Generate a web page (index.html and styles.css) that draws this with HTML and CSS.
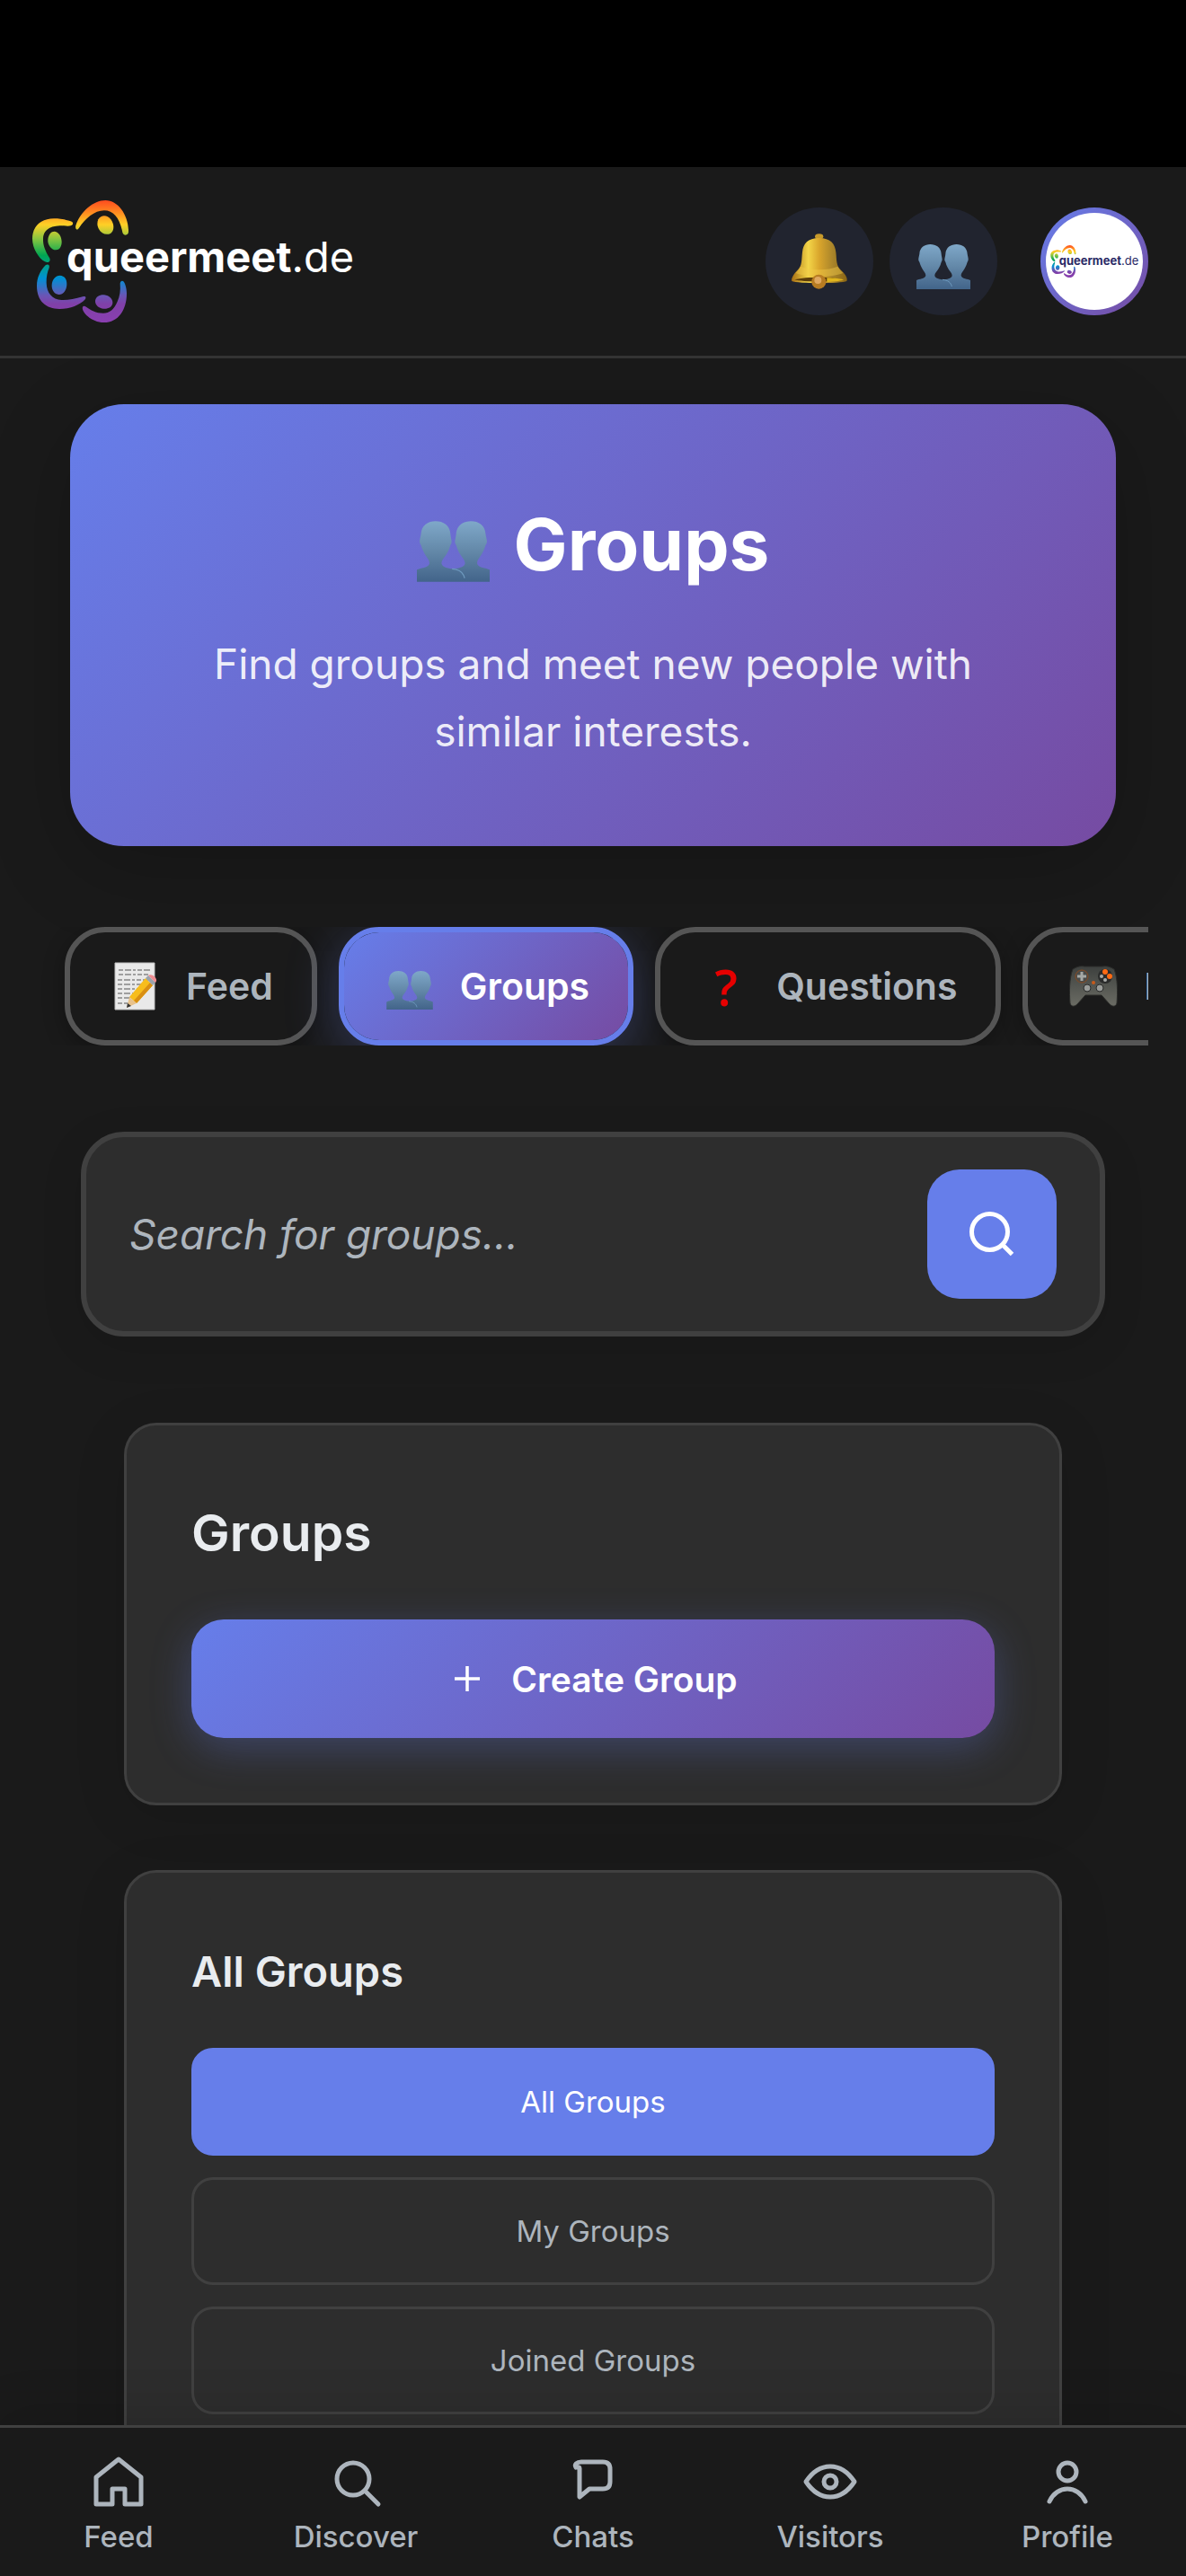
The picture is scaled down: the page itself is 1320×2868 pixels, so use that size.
FILE: index.html
```
<!DOCTYPE html>
<html lang="en">
<head>
  <meta charset="UTF-8">
  <meta name="viewport" content="width=device-width, initial-scale=1.0">
  <title>Groups - queermeet.de</title>
  <link rel="stylesheet" href="styles.css">
</head>
<body>

  <!-- Shared icons -->
  <svg class="sprite" width="0" height="0" aria-hidden="true">
    <defs>
      <linearGradient id="rainbow" gradientUnits="userSpaceOnUse" x1="0" y1="24" x2="0" y2="432">
        <stop offset="0" stop-color="#ff4b1f"/>
        <stop offset="0.1" stop-color="#ff8a20"/>
        <stop offset="0.2" stop-color="#ffd026"/>
        <stop offset="0.31" stop-color="#8dc63f"/>
        <stop offset="0.45" stop-color="#00a651"/>
        <stop offset="0.53" stop-color="#00a08a"/>
        <stop offset="0.64" stop-color="#0090d5"/>
        <stop offset="0.78" stop-color="#6a55b5"/>
        <stop offset="0.85" stop-color="#8040a8"/>
        <stop offset="1" stop-color="#8a3fb0"/>
      </linearGradient>
      <linearGradient id="bust" x1="0" y1="0" x2="0" y2="1">
        <stop offset="0" stop-color="#7fa8c9"/>
        <stop offset="0.5" stop-color="#6388a8"/>
        <stop offset="1" stop-color="#42648a"/>
      </linearGradient>
      <linearGradient id="gold" x1="0" y1="0" x2="1" y2="0">
        <stop offset="0" stop-color="#a86f14"/>
        <stop offset="0.3" stop-color="#f3d548"/>
        <stop offset="0.5" stop-color="#d9a52c"/>
        <stop offset="0.75" stop-color="#a8842a"/>
        <stop offset="1" stop-color="#8a6514"/>
      </linearGradient>
      <linearGradient id="pad" x1="0" y1="0" x2="0" y2="1">
        <stop offset="0" stop-color="#3d403e"/>
        <stop offset="1" stop-color="#6b6c64"/>
      </linearGradient>
    </defs>

    <symbol id="rosette" viewBox="18 24 324 408">
      <g fill="url(#rainbow)">
        <path d="M163 108C178 62 222 24 262 24C305 24 340 75 339 130C338 143 322 143 319 131C310 85 290 58 258 58C225 58 195 85 174 116C167 127 160 120 163 108Z"/>
        <path d="M146 94C120 86 105 84 90 85C45 86 18 112 18 152C18 185 40 218 60 229C72 236 81 226 75 216C60 192 53 172 54 152C55 122 78 110 110 109C125 109 138 111 146 109C156 106 156 97 146 94Z"/>
        <path d="M62 241C45 258 33 282 33 310C33 362 65 387 108 387C145 387 178 372 193 356C200 348 195 342 186 346C160 354 135 358 115 357C85 355 66 335 65 300C64 280 69 262 74 250C77 240 70 236 62 241Z"/>
        <path d="M186 380C180 395 215 432 257 432C305 432 333 390 333 335C333 318 328 303 324 297C319 290 312 293 311 302C313 325 310 345 302 362C290 390 275 401 255 401C230 401 212 390 198 380C192 376 188 376 186 380Z"/>
        <path d="M238 88C248 72 268 72 280 88C292 104 292 124 280 134C266 142 248 136 240 120C234 108 234 98 238 88Z"/>
        <path d="M70 155C72 137 82 127 93 128C106 130 116 145 116 163C116 180 108 190 97 190C82 190 68 172 70 155Z"/>
        <path d="M83 307C84 288 96 275 110 275C126 276 134 288 133 306C132 326 120 340 106 339C92 338 82 324 83 307Z"/>
        <path d="M228 359C230 346 242 339 258 340C275 342 287 354 286 368C284 380 272 387 256 386C240 384 227 374 228 359Z"/>
      </g>
    </symbol>

    <symbol id="people" viewBox="597 273 180 150">
      <path fill="url(#bust)" d="M597 423V393C605 389 626 388 628 378C629 366 615 360 607 332C601 324 605 318 607 305C608 283 625 273 643 273C662 273 679 283 680 305C681 318 686 324 680 332C673 360 657 366 658 378C660 388 677 390 687 391C697 390 714 388 716 378C717 366 701 360 694 332C688 324 693 318 694 305C695 283 712 273 731 273C749 273 766 283 767 305C769 318 773 324 767 332C759 360 745 366 746 378C748 388 769 389 777 393V423Z"/>
      <path fill="none" stroke="#6e9abf" stroke-width="3" d="M684 391C702 392 712 401 715 414"/>
    </symbol>

    <symbol id="bell" viewBox="180 239 186 184">
      <ellipse cx="272" cy="248" rx="14" ry="9" fill="#c79a2b"/>
      <path fill="url(#gold)" d="M272 253C310 253 325 272 328 300C331 325 328 345 345 360C362 375 368 388 364 397C345 406 200 406 181 397C178 388 186 375 200 360C216 345 213 325 216 300C219 272 234 253 272 253Z"/>
      <path fill="#f1c94a" opacity="0.45" d="M210 348C245 362 300 362 334 348C340 358 346 364 352 370C310 386 235 386 194 370C200 364 206 356 210 348Z"/>
      <path fill="#5d3d0a" d="M190 392C230 382 315 382 355 392C330 401 215 401 190 392Z"/>
      <path fill="#e0b51e" d="M298 386C325 386 345 389 355 392C340 398 315 400 298 400Z"/>
      <circle cx="271" cy="399" r="24" fill="#b87c22"/>
      <circle cx="268" cy="394" r="12" fill="#e0a860"/>
    </symbol>

    <symbol id="memo" viewBox="0 0 48 54">
      <path fill="#e9e9e9" stroke="#bdbdbd" d="M1 1H45V53H1Z"/>
      <path fill="none" stroke="#555" stroke-dasharray="5 2 7 2 3 2" d="M5 9H40M5 14H38M4 20H40M4 25H34M4 30H30M4 35H24M4 40H20M4 46H16"/>
      <path fill="#f7bd1c" d="M17 39L35 18L43 26L25 46Z"/>
      <path fill="#d98f12" d="M22 43L40 23L43 26L25 46Z"/>
      <path fill="#9aa3ad" d="M35 18L38 15L46 23L43 26Z"/>
      <path fill="#ef8d92" d="M38 15C42 12 50 19 46 23Z"/>
      <path fill="#e8c28c" d="M17 39L25 46L14 51Z"/>
      <path fill="#333" d="M15 46L19 49L14 51Z"/>
    </symbol>

    <symbol id="gamepad" viewBox="0 0 54 46">
      <path fill="url(#pad)" stroke="#2a2b29" d="M4 4C9 1 13 0 17 1H37C41 0 45 1 50 4C54 14 54 30 53 42C52 46 48 46 45 43L36 33H18L9 43C6 46 2 46 1 42C0 30 0 14 4 4Z"/>
      <circle cx="14" cy="12" r="7" fill="#4a4c4a" stroke="#8a4a20"/>
      <path stroke="#a5a8a5" stroke-width="3" d="M14 7V17M9 12H19"/>
      <circle cx="40" cy="12" r="8" fill="#2a2b2b"/>
      <circle cx="40" cy="7" r="3" fill="#ff6a13"/>
      <circle cx="45" cy="12" r="3" fill="#ff6a13"/>
      <circle cx="36" cy="12" r="2" fill="#a8aaa8"/>
      <circle cx="40" cy="16" r="2" fill="#a8aaa8"/>
      <circle cx="20" cy="25" r="4" fill="#9a9c99" stroke="#2a2b2b"/>
      <circle cx="34" cy="25" r="4" fill="#9a9c99" stroke="#2a2b2b"/>
      <circle cx="27" cy="19" r="2" fill="#c85a1a"/>
    </symbol>
  </svg>

  <div class="status-bar"></div>

  <!-- Header -->
  <header class="header">
    <a href="#" class="logo">
      <svg width="108" height="136" aria-hidden="true"><use href="#rosette"/></svg>
      <span class="logo-text"><b>queermeet</b>.de</span>
    </a>
    <div class="header-actions">
      <button class="icon-btn" aria-label="Notifications"><svg width="62" height="62"><use href="#bell"/></svg></button>
      <button class="icon-btn" aria-label="Friends"><svg class="people-sm" width="60" height="50"><use href="#people"/></svg></button>
      <a href="#" class="avatar" aria-label="My profile">
        <span class="avatar-inner">
          <svg width="29" height="36" aria-hidden="true"><use href="#rosette"/></svg>
          <span class="avatar-text"><b>queermeet</b>.de</span>
        </span>
      </a>
    </div>
  </header>

  <main class="content">

    <!-- Hero -->
    <section class="hero">
      <h1><svg width="81" height="68" aria-hidden="true"><use href="#people"/></svg>Groups</h1>
      <p>Find groups and meet new people with similar interests.</p>
    </section>

    <!-- Tabs -->
    <nav class="tabs" aria-label="Sections">
      <a href="#" class="tab"><span class="tab-icon"><svg width="48" height="54"><use href="#memo"/></svg></span>Feed</a>
      <a href="#" class="tab active"><span class="tab-icon"><svg class="people-tab" width="52" height="43"><use href="#people"/></svg></span>Groups</a>
      <a href="#" class="tab"><span class="tab-icon question" aria-hidden="true">?</span>Questions</a>
      <a href="#" class="tab"><span class="tab-icon"><svg width="54" height="46"><use href="#gamepad"/></svg></span>Mini Games</a>
    </nav>

    <!-- Search -->
    <form class="search">
      <input type="search" placeholder="Search for groups..." aria-label="Search for groups">
      <button type="submit" aria-label="Search">
        <svg width="60" height="60" viewBox="0 0 24 24" fill="none" stroke="currentColor" stroke-width="2"><circle cx="11" cy="11" r="8"/><path d="M16.6 16.6L21 21"/></svg>
      </button>
    </form>

    <!-- Create group -->
    <section class="card">
      <h2>Groups</h2>
      <button class="create-btn">
        <svg width="42" height="42" viewBox="0 0 24 24" fill="none" stroke="currentColor" stroke-width="2"><path d="M12 4V20M4 12H20"/></svg>
        Create Group
      </button>
    </section>

    <!-- Group filter -->
    <section class="card">
      <h3>All Groups</h3>
      <div class="filters">
        <button class="filter active">All Groups</button>
        <button class="filter">My Groups</button>
        <button class="filter">Joined Groups</button>
      </div>
    </section>

  </main>

  <!-- Bottom navigation -->
  <nav class="bottom-nav" aria-label="Main">
    <a href="#">
      <svg viewBox="0 0 66 66"><path d="M8 28L33 8L58 28V58H40V41H26V58H8Z"/></svg>
      Feed
    </a>
    <a href="#">
      <svg viewBox="0 0 66 66"><circle cx="30" cy="30" r="18"/><path d="M44 44L58 58"/></svg>
      Discover
    </a>
    <a href="#">
      <svg viewBox="0 0 66 66"><path d="M14 17C12 14 15 11 20 11H44Q52 11 52 19V33Q52 41 44 41H29L18 50V18Q18 16 15 17"/></svg>
      Chats
    </a>
    <a href="#">
      <svg viewBox="0 0 66 66"><path d="M6 33C12 24 21 16 33 16S54 24 60 33C54 42 45 50 33 50S12 42 6 33Z"/><circle cx="33" cy="33" r="7"/></svg>
      Visitors
    </a>
    <a href="#">
      <svg viewBox="0 0 66 66"><circle cx="33" cy="22" r="10"/><path d="M13 55C17 46 25 41 33 41S49 46 53 55"/></svg>
      Profile
    </a>
  </nav>

</body>
</html>
```

FILE: styles.css
```
/* General Styles */
* {
  box-sizing: border-box;
}

body {
  margin: 0;
  height: 100vh;
  display: flex;
  flex-direction: column;
  overflow: hidden;
  background-color: #1a1a1a;
  color: #e9ecef;
  font-family: Inter, "Liberation Sans", sans-serif;
}

a {
  color: inherit;
  text-decoration: none;
}

button,
input {
  font-family: inherit;
  margin: 0;
}

button {
  cursor: pointer;
}

svg {
  display: block;
  flex-shrink: 0;
}

.sprite {
  position: absolute;
}

.status-bar {
  height: 186px;
  flex-shrink: 0;
  background-color: #000;
}

/* Header */
.header {
  display: flex;
  justify-content: space-between;
  align-items: center;
  flex-shrink: 0;
  padding: 36px 42px 36px 36px;
  border-bottom: 3px solid #333;
}

.logo {
  display: flex;
  align-items: center;
  height: 138px;
  color: #fff;
}

/* the name starts inside the rosette */
.logo-text {
  margin: 0 0 10px -70px;
  font-size: 47px;
  line-height: 56px;
}

.header-actions {
  display: flex;
  align-items: center;
  gap: 18px;
}

.icon-btn {
  display: flex;
  align-items: center;
  justify-content: center;
  width: 120px;
  height: 120px;
  padding: 0;
  border: none;
  border-radius: 50%;
  background-color: rgba(102, 126, 234, 0.1);
}

.people-sm {
  margin-top: 12px;
}

.avatar {
  width: 120px;
  height: 120px;
  margin-left: 30px;
  padding: 6px;
  border-radius: 50%;
  background: linear-gradient(135deg, #667eea, #764ba2);
  color: #2a2a66;
}

.avatar-inner {
  display: flex;
  align-items: center;
  justify-content: center;
  height: 100%;
  border-radius: 50%;
  background-color: #fff;
}

.avatar-text {
  margin: 0 0 2px -19px;
  font-size: 13px;
  line-height: 16px;
}

/* Content */
.content {
  flex: 1;
  min-height: 0;
  padding-top: 51px;
  overflow-y: auto;
  scrollbar-width: none;
}

.hero {
  margin: 0 78px;
  padding: 90px 120px;
  border-radius: 60px;
  background: linear-gradient(135deg, #667eea 0%, #764ba2 100%);
  box-shadow: 0 24px 96px rgba(0, 0, 0, 0.2);
  text-align: center;
}

.hero h1 {
  display: flex;
  align-items: center;
  justify-content: center;
  gap: 27px;
  margin: 0 0 30px;
  color: #fff;
  font-size: 80px;
  font-weight: 700;
  line-height: 132px;
}

.hero h1 svg {
  margin-top: 16px;
}

.hero p {
  margin: 0;
  color: rgba(255, 255, 255, 0.9);
  font-size: 46px;
  line-height: 75px;
}

/* Tabs */
.tabs {
  display: flex;
  gap: 24px;
  margin: 90px 42px 96px;
  padding-left: 30px;
  overflow-x: auto;
  scrollbar-width: none;
}

.tab {
  display: flex;
  align-items: center;
  flex-shrink: 0;
  gap: 26px;
  height: 132px;
  padding: 0 43px;
  border: 6px solid #555;
  border-radius: 45px;
  background-color: #1a1a1a;
  box-shadow: 0 6px 24px rgba(0, 0, 0, 0.3);
  color: #adb5bd;
  font-size: 41px;
  font-weight: 600;
  white-space: nowrap;
}

.tab.active {
  border-color: #667eea;
  background: linear-gradient(135deg, #667eea 0%, #764ba2 100%) padding-box;
  box-shadow: 0 12px 60px rgba(102, 126, 234, 0.3);
  color: #fff;
}

.tab-icon {
  display: flex;
  justify-content: center;
  width: 60px;
}

.people-tab {
  margin-top: 9px;
}

.question {
  color: #e60000;
  font-family: "Open Sans", sans-serif;
  font-size: 56px;
  font-weight: 600;
  line-height: 60px;
}

/* Search */
.search {
  display: flex;
  align-items: center;
  margin: 0 90px 96px;
  padding: 36px 48px;
  border: 6px solid #404040;
  border-radius: 48px;
  background-color: #2d2d2d;
  box-shadow: 0 12px 48px rgba(0, 0, 0, 0.1);
}

.search input {
  flex: 1;
  min-width: 0;
  padding: 0;
  border: none;
  outline: none;
  background: none;
  color: #e9ecef;
  font-size: 46px;
}

.search input::placeholder {
  color: #adb5bd;
  font-style: italic;
  opacity: 1;
}

.search button {
  display: flex;
  align-items: center;
  justify-content: center;
  width: 144px;
  height: 144px;
  padding: 0;
  border: none;
  border-radius: 36px;
  background-color: #667eea;
  color: #fff;
}

/* Cards */
.card {
  margin: 0 138px 72px;
  padding: 72px;
  border: 3px solid #404040;
  border-radius: 36px;
  background-color: #2d2d2d;
  box-shadow: 0 12px 60px rgba(0, 0, 0, 0.1);
}

.card h2 {
  margin: 0 0 48px;
  font-size: 57px;
  font-weight: 600;
  line-height: 96px;
}

.card h3 {
  margin: 0 0 48px;
  font-size: 47px;
  font-weight: 600;
  line-height: 75px;
}

.create-btn {
  display: flex;
  align-items: center;
  justify-content: center;
  gap: 28px;
  width: 100%;
  height: 132px;
  border: none;
  border-radius: 36px;
  background: linear-gradient(135deg, #667eea 0%, #764ba2 100%);
  box-shadow: 0 12px 45px rgba(102, 126, 234, 0.3);
  color: #fff;
  font-size: 39px;
  font-weight: 600;
}

.filters {
  display: flex;
  flex-direction: column;
  gap: 24px;
}

.filter {
  height: 120px;
  border: 3px solid #404040;
  border-radius: 24px;
  background: none;
  color: #adb5bd;
  font-size: 33px;
}

.filter.active {
  border-color: #667eea;
  background-color: #667eea;
  color: #fff;
}

/* Bottom navigation */
.bottom-nav {
  position: relative;
  display: grid;
  grid-template-columns: repeat(5, 1fr);
  flex-shrink: 0;
  padding: 27px 0 24px;
  border-top: 3px solid #404040;
  background-color: #1a1a1a;
  box-shadow: 0 -6px 60px rgba(0, 0, 0, 0.15);
}

.bottom-nav a {
  display: flex;
  flex-direction: column;
  align-items: center;
  gap: 8px;
  color: #adb5bd;
  font-size: 33px;
  font-weight: 500;
  line-height: 40px;
}

.bottom-nav svg {
  width: 66px;
  height: 66px;
  fill: none;
  stroke: currentColor;
  stroke-width: 5;
  stroke-linecap: round;
  stroke-linejoin: round;
}
```
